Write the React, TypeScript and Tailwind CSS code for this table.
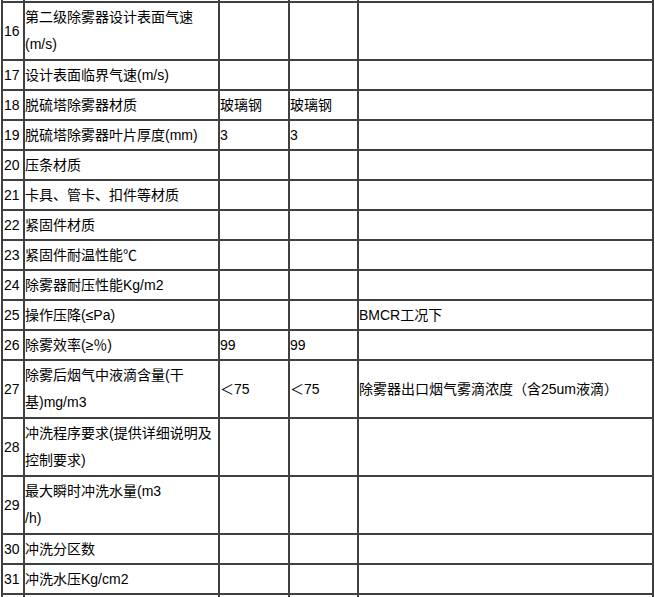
import React from "react";

type Row = { n: string; a: React.ReactNode; b?: string; c?: string; d?: string; h: "s" | "d" };

const rows: Row[] = [
  { n: "", a: "", h: "s" },
  { n: "16", a: "第二级除雾器设计表面气速(m/s)", h: "d" },
  { n: "17", a: "设计表面临界气速(m/s)", h: "s" },
  { n: "18", a: "脱硫塔除雾器材质", b: "玻璃钢", c: "玻璃钢", h: "s" },
  { n: "19", a: "脱硫塔除雾器叶片厚度(mm)", b: "3", c: "3", h: "s" },
  { n: "20", a: "压条材质", h: "s" },
  { n: "21", a: "卡具、管卡、扣件等材质", h: "s" },
  { n: "22", a: "紧固件材质", h: "s" },
  { n: "23", a: "紧固件耐温性能℃", h: "s" },
  { n: "24", a: "除雾器耐压性能Kg/m2", h: "s" },
  { n: "25", a: "操作压降(≤Pa)", d: "BMCR工况下", h: "s" },
  { n: "26", a: "除雾效率(≥％)", b: "99", c: "99", h: "s" },
  {
    n: "27",
    a: "除雾后烟气中液滴含量(干基)mg/m3",
    b: "＜75",
    c: "＜75",
    d: "除雾器出口烟气雾滴浓度（含25um液滴）",
    h: "d",
  },
  { n: "28", a: "冲洗程序要求(提供详细说明及控制要求)", h: "d" },
  {
    n: "29",
    a: (
      <>
        最大瞬时冲洗水量(m3
        <br />
        /h)
      </>
    ),
    h: "d",
  },
  { n: "30", a: "冲洗分区数", h: "s" },
  { n: "31", a: "冲洗水压Kg/cm2", h: "s" },
  { n: "", a: "", h: "s" },
];

const cell = "border border-[#404040] p-0 align-middle text-left";

export default function App() {
  return (
    <div
      className="w-[655px] bg-white text-black text-[14px] leading-[27px]"
      style={{ fontFamily: '"Liberation Sans", Arial, "Noto Sans CJK SC", sans-serif' }}
    >
      <table className="ml-[1px] -mt-[29px] w-[653px] table-fixed border-separate border-spacing-0 border border-[#404040]">
        <colgroup>
          <col className="w-[22px]" />
          <col className="w-[195px]" />
          <col className="w-[70px]" />
          <col className="w-[69px]" />
          <col className="w-[295px]" />
        </colgroup>
        <tbody>
          {rows.map((r, i) => (
            <tr key={i} className={r.h === "s" ? "h-[30px]" : "h-[58px]"}>
              <td className={cell + " pl-[1px]"}>{r.n}</td>
              <td className={cell}>{r.a}</td>
              <td className={cell}>{r.b ?? ""}</td>
              <td className={cell}>{r.c ?? ""}</td>
              <td className={cell}>{r.d ?? ""}</td>
            </tr>
          ))}
        </tbody>
      </table>
    </div>
  );
}
